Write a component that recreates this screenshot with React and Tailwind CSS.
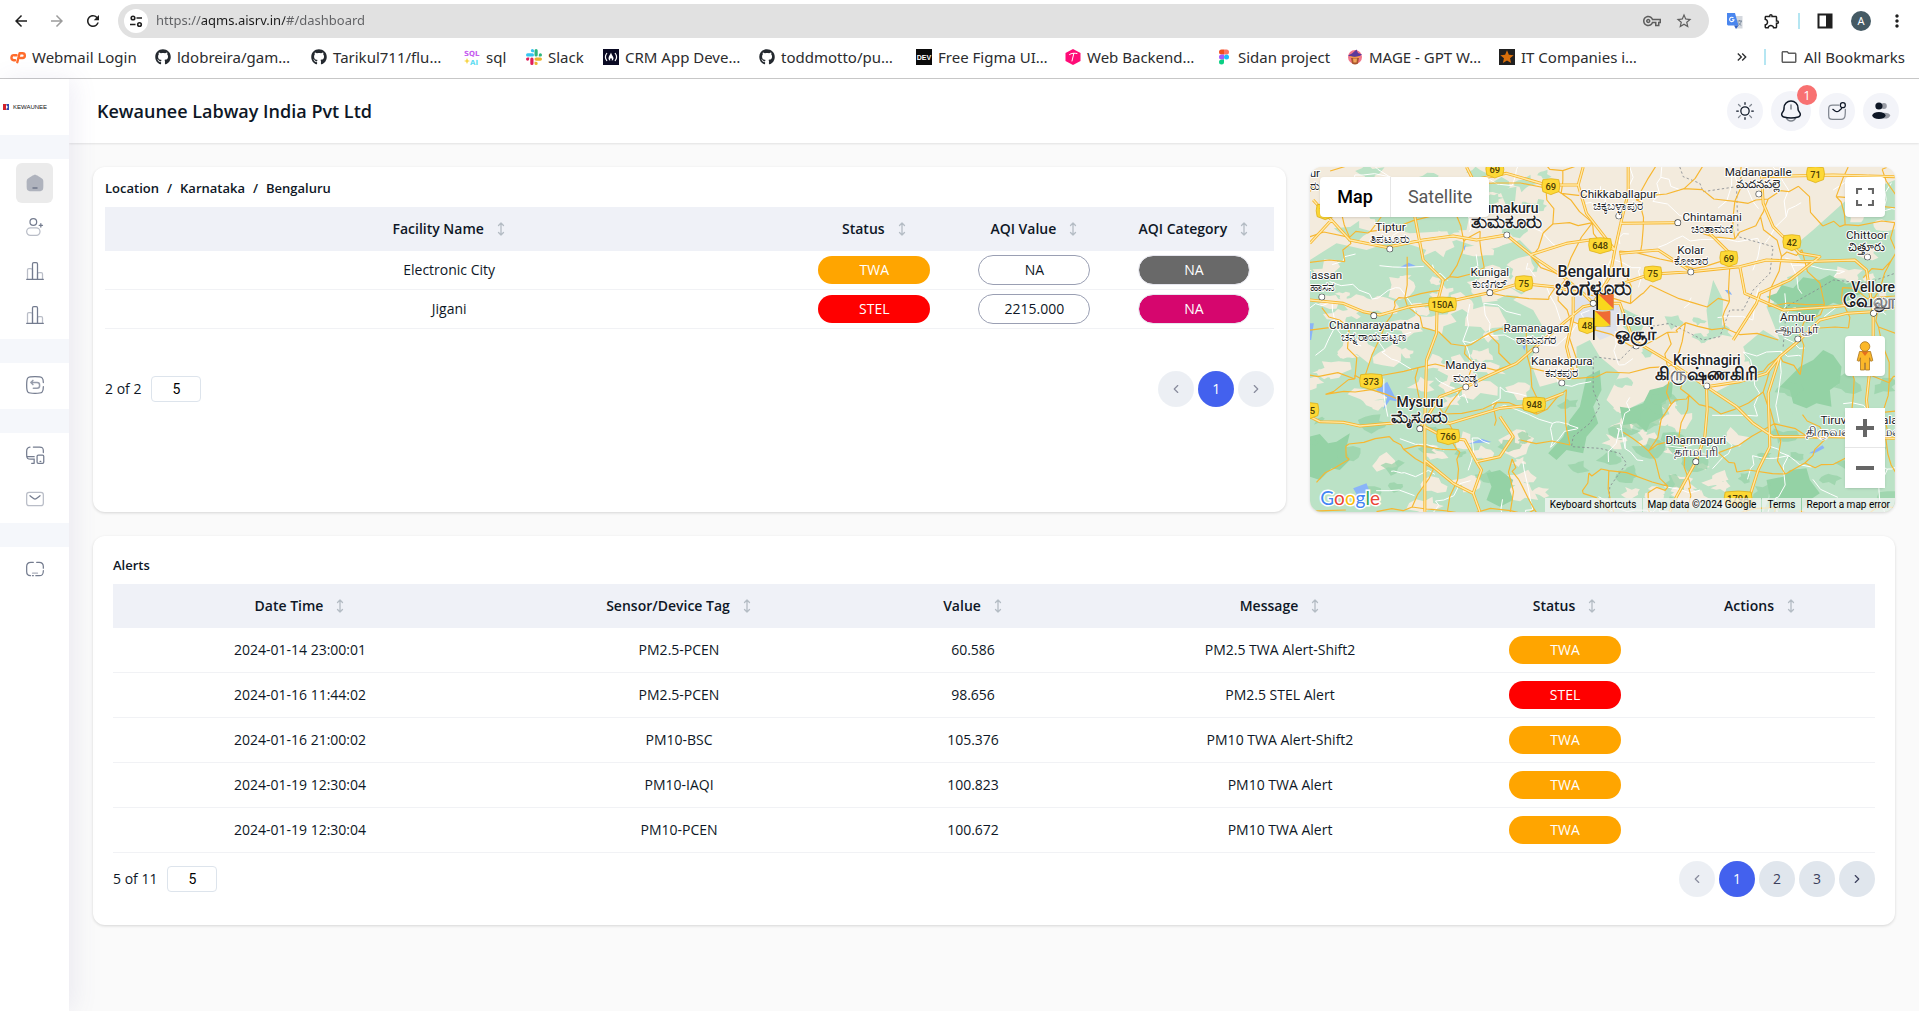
import React from "react";
import {
  MdArrowBack, MdArrowForward, MdRefresh, MdStarBorder, MdOutlineVpnKey, MdMoreVert,
  MdOutlineExtension, MdKeyboardDoubleArrowRight, MdOutlineFolder, MdStar,
} from "react-icons/md";
import { FaGithub } from "react-icons/fa";
import { ChevronLeft, ChevronRight } from "lucide-react";

/* ---------- Bookmark icons ---------- */

const CpanelIcon = () => (
  <svg viewBox="0 0 16 16" className="size-4" fill="none" stroke="#ff6c2c" strokeWidth="2.400" strokeLinecap="round" strokeLinejoin="round">
    <path d="M6.500 6.200H4.300a2.500 2.500 0 00-.6 5H5" />
    <path d="M7.300 13.200L9.600 4.200h2.600a2.300 2.300 0 01.4 4.800H10.300" />
  </svg>
);

const SqlIcon = () => (
  <svg viewBox="0 0 16 16" className="size-4">
    <g fontFamily="DejaVu Sans" fontWeight="700" fontSize="7">
      <text x="0" y="6.5" fill="#c65cf0">SQL</text>
      <text x="6" y="15.5" fill="#5fdcf2">AI</text>
    </g>
    <path d="M3 9l1 2.200 2 .8-2 .8-1 2.200-1-2.200-2-.8 2-.8z" fill="#f7d548" />
  </svg>
);

const SlackIcon = () => (
  <svg viewBox="0 0 16 16" className="size-4">
    <path d="M6.400 0a1.600 1.600 0 000 3.200H8V1.600A1.600 1.600 0 006.400 0zM1.600 4.300h4.800a1.600 1.600 0 010 3.200H1.600a1.600 1.600 0 010-3.200z" fill="#36c5f0" />
    <path d="M16 5.900a1.600 1.600 0 00-3.200 0v1.600h1.600A1.600 1.600 0 0016 5.900zM11.700 1.600v4.300a1.600 1.600 0 01-3.200 0V1.600a1.600 1.600 0 013.200 0z" fill="#2eb67d" />
    <path d="M10.100 16a1.600 1.600 0 000-3.200H8.500v1.600a1.600 1.600 0 001.600 1.600zM14.400 11.700h-4.300a1.600 1.600 0 010-3.200h4.300a1.600 1.600 0 010 3.200z" fill="#ecb22e" />
    <path d="M0 10.100a1.600 1.600 0 003.200 0V8.500H1.600A1.600 1.600 0 000 10.100zM4.300 14.400v-4.300a1.600 1.600 0 013.200 0v4.300a1.600 1.600 0 01-3.200 0z" fill="#e01e5a" />
  </svg>
);

const CampIcon = () => (
  <svg viewBox="0 0 16 16" className="size-4">
    <rect width="16" height="16" fill="#0a0a23" />
    <path d="M4 4c-2 2.500-2 5.500 0 8M12 4c2 2.500 2 5.500 0 8" fill="none" stroke="#fff" strokeWidth="1.200" />
    <path d="M8 3.500c-.5 2-2.500 3.500-2.500 5.700 0 1.500 1 2.400 1.800 2.600-.5-1-.2-2 .7-2.700.9.7 1.200 1.700.7 2.700.8-.2 1.800-1.100 1.800-2.600C10.500 7.500 8.500 6 8 3.500z" fill="#fff" />
  </svg>
);

const DevIcon = () => (
  <svg viewBox="0 0 16 16" className="size-4">
    <rect width="16" height="16" fill="#0b0b0b" />
    <text x="8" y="11" textAnchor="middle" fontFamily="Liberation Sans" fontWeight="700" fontSize="7" fill="#fff">DEV</text>
  </svg>
);

const HexIcon = () => (
  <svg viewBox="0 0 16 16" className="size-4">
    <path d="M8 0l7.500 4v8L8 16 .5 12V4z" fill="#ff0b77" />
    <path d="M4.500 5.500c2-1.500 5-1.500 7.500-1M8.800 4.500L7 12" stroke="#fff" strokeWidth="1" fill="none" strokeLinecap="round" />
  </svg>
);

const FigmaIcon = () => (
  <svg viewBox="0 0 16 16" className="size-4">
    <path d="M8 .5H5.500a2.500 2.500 0 000 5H8z" fill="#f24e1e" />
    <path d="M8 .5h2.500a2.500 2.500 0 010 5H8z" fill="#ff7262" />
    <path d="M8 5.500H5.500a2.500 2.500 0 000 5H8z" fill="#a259ff" />
    <circle cx="10.500" cy="8" r="2.500" fill="#1abcfe" />
    <path d="M8 10.500H5.500a2.500 2.500 0 102.500 2.500z" fill="#0acf83" />
  </svg>
);

const MageIcon = () => (
  <svg viewBox="0 0 16 16" className="size-4">
    <circle cx="8" cy="8" r="7" fill="#f3768a" />
    <path d="M4 9h8l-1 5.500c-2 1.300-4 1.300-6 0z" fill="#a8552e" />
    <path d="M1 6.500C4 8.500 12 8.500 15 5.500L11 4 9.500.5 5 4.500z" fill="#5b3a9b" />
    <path d="M3 7.500c3 1.200 7 1.200 10 0" stroke="#f0a52c" fill="none" />
    <path d="M6 9.500h4l-.5 4h-3z" fill="#f2a65a" />
  </svg>
);

const StarBox = () => (
  <span className="flex size-4 items-center justify-center bg-[#202020] text-[#d96f0b]">
    <MdStar className="size-4" />
  </span>
);

const TranslateIcon = () => (
  <svg viewBox="0 0 16 16" className="size-4">
    <path d="M6 3h9.500v12.500H9z" fill="#d4d8de" />
    <path d="M0 0h8l3.500 12.500H1L0 11.500z" fill="#4a86ee" />
    <path d="M7 12.500h4.500L9 16z" fill="#2f5fc4" />
    <path d="M6.500 5A2.200 2.200 0 107 6.700H5" fill="none" stroke="#fff" strokeWidth="1.100" />
    <path d="M10.500 8h4.500M12.700 7v1M14.300 8c-.4 2-1.500 3.300-3 4.300M11.300 9.500c.8 1.500 2 2.300 3 2.800" fill="none" stroke="#6d7f93" strokeWidth=".9" />
  </svg>
);

const bookmarks = [
  { label: "Webmail Login", icon: <CpanelIcon /> },
  { label: "ldobreira/gam…", icon: <FaGithub className="size-4 text-[#24292f]" /> },
  { label: "Tarikul711/flu…", icon: <FaGithub className="size-4 text-[#24292f]" /> },
  { label: "sql", icon: <SqlIcon /> },
  { label: "Slack", icon: <SlackIcon /> },
  { label: "CRM App Deve…", icon: <CampIcon /> },
  { label: "toddmotto/pu…", icon: <FaGithub className="size-4 text-[#24292f]" /> },
  { label: "Free Figma UI…", icon: <DevIcon /> },
  { label: "Web Backend…", icon: <HexIcon /> },
  { label: "Sidan project", icon: <FigmaIcon /> },
  { label: "MAGE - GPT W…", icon: <MageIcon /> },
  { label: "IT Companies i…", icon: <StarBox /> },
];

function BrowserBar() {
  return (
    <div className="border-b border-[#c8c8c8] bg-white font-['Noto_Sans',sans-serif] text-[#2b2c2e]">
      <div className="flex h-[42px] items-center px-3">
        <div className="flex items-center gap-[18px]">
          <button aria-label="Back"><MdArrowBack className="size-[18px] text-[#1f1f1f]" /></button>
          <button aria-label="Forward"><MdArrowForward className="size-[18px] text-[#9c9c9c]" /></button>
          <button aria-label="Reload"><MdRefresh className="size-[18px] text-[#1f1f1f]" /></button>
        </div>
        <form className="ml-4 flex h-[34px] flex-1 items-center rounded-full bg-[#e1e1e1] pr-4 pl-1.5">
          <button type="button" aria-label="View site information" className="flex size-6 items-center justify-center rounded-full bg-white">
            <svg viewBox="0 0 14 14" className="size-3.5 text-[#1f1f1f]" fill="none" stroke="currentColor" strokeWidth="1.600">
              <circle cx="4" cy="4" r="1.800" /><path d="M7.500 4H13M1 10.500h5.500" />
              <circle cx="10.500" cy="10.500" r="1.800" />
            </svg>
          </button>
          <input
            aria-label="Address"
            defaultValue="https://aqms.aisrv.in/#/dashboard"
            className="ml-2 min-w-0 flex-1 bg-[linear-gradient(90deg,#5f6063_45px,#1b1b1b_45px,#1b1b1b_129px,#5f6063_129px)] bg-clip-text text-[13px] text-transparent outline-none"
          />
          <div className="flex items-center gap-3.5 text-[#5e5e5e]">
            <button type="button" aria-label="Passwords"><MdOutlineVpnKey className="size-[18px]" /></button>
            <button type="button" aria-label="Bookmark this page"><MdStarBorder className="size-[18px]" /></button>
          </div>
        </form>
        <div className="ml-[18px] flex items-center text-[#1f1f1f]">
          <button aria-label="Translate" className="mr-5"><TranslateIcon /></button>
          <button aria-label="Extensions"><MdOutlineExtension className="size-[18px]" /></button>
          <span className="mx-[17px] h-4 w-0.5 bg-[#b5e6f2]" />
          <button aria-label="Side panel" className="mr-[18px]">
            <svg viewBox="0 0 16 16" className="size-4"><path d="M1.500 1.500h13v13h-13z" fill="none" stroke="#1f1f1f" strokeWidth="2" /><path d="M9 1h6v14H9z" fill="#1f1f1f" /></svg>
          </button>
          <button aria-label="Profile" className="mr-4 size-5 rounded-full bg-[#455a64] text-[11px] leading-5 text-white">A</button>
          <button aria-label="Menu"><MdMoreVert className="size-5" /></button>
        </div>
      </div>
      <nav aria-label="Bookmarks" className="flex h-9 items-center justify-between pr-3.5 pb-1.5 pl-2.5 text-[15px]">
        <ul className="grid grid-cols-[145px_156px_153px_62px_77px_156px_157px_149px_151px_131px_152px_150px]">
          {bookmarks.map((b) => (
            <li key={b.label}>
              <a href="#" className="flex items-center gap-1.5 whitespace-nowrap">{b.icon}{b.label}</a>
            </li>
          ))}
        </ul>
        <div className="flex items-center">
          <button aria-label="More bookmarks"><MdKeyboardDoubleArrowRight className="size-4" /></button>
          <span className="mx-3.5 h-4 w-0.5 bg-[#b5e6f2]" />
          <a href="#" className="flex items-center gap-1.5 whitespace-nowrap">
            <MdOutlineFolder className="size-[18px] text-[#5e5e5e]" />All Bookmarks
          </a>
        </div>
      </nav>
    </div>
  );
}

/* ---------- Sidebar ---------- */

function Duo({ children }) {
  return (
    <svg viewBox="0 0 24 24" className="size-5" fill="none" stroke="#747c8f" strokeWidth="1.500" strokeLinecap="round">
      {children}
    </svg>
  );
}

const ChartIcon = () => (
  <Duo>
    <path d="M22 22H2" />
    <path d="M3 22V10.500C3 9.700 3.500 9 4.500 9h2C7.500 9 9 9.500 9 10.500V22M15 22v-6.500c0-.8.5-1.500 1.500-1.500h3c1 0 1.500.7 1.500 1.500V22" opacity=".5" />
    <path d="M9 22V3.500C9 2.500 9.700 2 10.500 2h3c.8 0 1.500.5 1.500 1.500V22" />
  </Duo>
);

const homePath =
  "M2 12.200c0-2.290 0-3.430.52-4.380.52-.95 1.470-1.540 3.370-2.720l2-1.240C9.890 2.620 10.900 2 12 2s2.100.62 4.100 1.860l2 1.240c1.900 1.180 2.850 1.770 3.370 2.720.52.95.52 2.100.52 4.380v1.530c0 3.900 0 5.850-1.170 7.060C19.660 22 17.770 22 14 22h-4c-3.770 0-5.660 0-6.830-1.210C2 19.580 2 17.630 2 13.730z";

const sidebarGroups = [
  [
    { name: "Dashboard", active: true, icon: <Duo><path d={homePath} fill="#747c8f" stroke="none" opacity=".5" /><path d="M9 18h6" strokeWidth="2" strokeLinecap="butt" /></Duo> },
    { name: "Users", icon: <Duo><circle cx="10" cy="6" r="4" /><path d="M21 10h-4M19 8v4" /><rect x="2" y="13" width="16" height="9" rx="4.500" opacity=".5" /></Duo> },
    { name: "Device reports", icon: <ChartIcon /> },
    { name: "Sensor reports", icon: <ChartIcon /> },
  ],
  [{ name: "Back", icon: <Duo><path d="M22 14c0 4 0 5-1.500 6.500S17 22 12 22s-7 0-8.500-1.500S2 17 2 12s0-7 1.500-8.500S7 2 12 2s7 0 8.500 1.500C21.600 4.600 22 6 22 9" /><path d="M7 9h7.500a3 3 0 013 3v1a3 3 0 01-3 3H10M7 9l2.500-2.500M7 9l2.500 2.500" strokeWidth="1.800" opacity=".75" /></Duo> }],
  [
    { name: "Devices", icon: <Duo><path d="M22 9V7c0-3.500-1-4.500-4.500-4.500H10M6 2.600C3 3 2 4 2 7.500V12c0 4 1 5 5 5h4v5M2 14h9M8 22h3" /><rect x="14.500" y="12" width="8" height="10" rx="1.500" /><path d="M18 19.500h1" /></Duo> },
    { name: "Mail", icon: <Duo><rect x="2" y="4" width="20" height="16" rx="3" opacity=".5" /><path d="M6 8l2.160 1.800C10 11.330 10.900 12.100 12 12.100s2-.77 3.840-2.300L18 8" /></Duo> },
  ],
  [{ name: "Display", icon: <Duo><path d="M10 4H7C3.500 4 2 5 2 9v6c0 3.500 1 5 4.500 5M14 4h3c3.500 0 5 1 5 5v2M22 14c0 4.500-1 6-5 6h-4M9 20h1" /><path d="M9 17h6" opacity=".6" /></Duo> }],
];

function Sidebar() {
  return (
    <aside className="relative z-10 w-[69px] shrink-0 bg-white shadow-[5px_0_25px_0_rgba(94,92,154,0.1)]">
      <a href="#" aria-label="Home" className="flex h-14 items-center gap-1 pl-[3px]">
        <svg viewBox="0 0 6 6" className="size-1.5"><path d="M0 0h3.500v6H0z" fill="#d2232a" /><path d="M3.500 0H6v6H3.500z" fill="#2d4db0" /><path d="M3 1l2 2-2 2z" fill="#fff" /></svg>
        <span className="font-['Liberation_Sans',sans-serif] text-[6px] leading-none text-[#111]">KEWAUNEE</span>
      </a>
      {sidebarGroups.map((group, i) => (
        <div key={i}>
          <div className="h-6 bg-[#f5f7fb]" />
          <ul className={i === 0 ? "pt-1" : "pt-0.5"}>
            {group.map((item, j) => (
              <li key={j} className="flex justify-center px-4 pb-1">
                <a
                  href="#"
                  aria-label={item.name}
                  className={
                    item.active
                      ? "flex h-10 w-[38px] items-center justify-center rounded-md bg-[#ebebeb]"
                      : "flex h-10 w-[38px] items-center justify-center rounded-md"
                  }
                >
                  {item.icon}
                </a>
              </li>
            ))}
          </ul>
        </div>
      ))}
    </aside>
  );
}

/* ---------- Header ---------- */

function Header() {
  const round = "flex size-9 items-center justify-center rounded-full bg-[#f3f4f9]";
  return (
    <header className="flex h-16 items-center justify-between bg-white pr-5 pl-7 shadow-[0_1px_2px_rgba(0,0,0,0.1)]">
      <h1 className="text-[18px] font-semibold">Kewaunee Labway India Pvt Ltd</h1>
      <div className="flex items-center gap-2">
        <button aria-label="Toggle theme" className={round}>
          <svg viewBox="0 0 24 24" className="size-5" fill="none" stroke="#0e1726" strokeWidth="1.500" strokeLinecap="round">
            <circle cx="12" cy="12" r="5" />
            <path d="M12 2v2M12 20v2M4 12H2M22 12h-2" />
            <path d="M19.800 4.200l-2.200 2M4.200 4.200l2.200 2M6.400 17.600l-2.200 2.200M19.800 19.800l-2.200-2.200" opacity=".5" />
          </svg>
        </button>
        <button aria-label="Notifications, 1 new" className="relative flex size-10 items-center justify-center rounded-full bg-[#f3f4f9]">
          <svg viewBox="0 0 24 24" className="size-6" fill="none" stroke="#0e1726" strokeWidth="1.500" strokeLinecap="round">
            <path d="M19 9.700V9c0-3.870-3.130-7-7-7S5 5.130 5 9v.7c0 .85-.25 1.670-.72 2.380l-1.150 1.720c-1.050 1.570-.25 3.710 1.580 4.210a27.600 27.600 0 0014.580 0c1.830-.5 2.630-2.640 1.580-4.210l-1.150-1.720A4.290 4.290 0 0119 9.700z" />
            <path d="M7.500 19c.66 1.750 2.420 3 4.500 3s3.840-1.250 4.500-3M12 6v4" opacity=".5" />
          </svg>
          <span className="absolute -top-1.5 -right-1.5 size-5 rounded-full bg-[#f87171] text-center text-[13px] leading-5 text-white">1</span>
        </button>
        <button aria-label="Messages" className={round}>
          <svg viewBox="0 0 24 24" className="size-5" fill="none" stroke="#0e1726" strokeWidth="1.500" strokeLinecap="round">
            <path d="M22 10c0 8 0 12-5 12H7c-4 0-5-1-5-5v-7c0-4 1-5 5-5h7" opacity=".5" />
            <circle cx="19" cy="5" r="3" />
            <path d="M7 10l2.700 2c1.500 1.100 3 1.100 4.500 0L17.500 9" />
          </svg>
        </button>
        <button aria-label="Account" className={round}>
          <svg viewBox="0 0 24 24" className="size-5" fill="#0e1726">
            <circle cx="15.500" cy="6" r="3.500" opacity=".4" />
            <ellipse cx="16.500" cy="17.500" rx="6.500" ry="3.500" opacity=".4" />
            <circle cx="9.500" cy="6" r="4.300" /><ellipse cx="9.500" cy="17.500" rx="8" ry="4.200" />
          </svg>
        </button>
      </div>
    </header>
  );
}

/* ---------- Tables ---------- */

function Th({ children, className }) {
  return (
    <th className={className}>
      <button className="mx-auto flex items-center gap-3 font-semibold whitespace-nowrap">
        {children}
        <svg viewBox="0 0 10 14" className="h-3.5 w-2.5" fill="none" stroke="#b4bcc4" strokeWidth="1.300" strokeLinecap="round" strokeLinejoin="round">
          <path d="M5 1v12M2.500 3.500L5 1l2.500 2.500M2.500 10.500L5 13l2.500-2.500" />
        </svg>
      </button>
    </th>
  );
}

const pillTone = {
  TWA: "h-7 bg-[#ffa500] text-white",
  STEL: "h-7 bg-[#ff0000] text-white",
  outline: "h-[30px] border border-[#9a9fb3]",
  gray: "h-[30px] border border-[#e6e6ee] bg-[#696969] bg-clip-padding text-white",
  pink: "h-[30px] border border-[#e6e6ee] bg-[#d6066e] bg-clip-padding text-white",
};

function Pill({ tone, children }) {
  return (
    <span className={`mx-auto flex w-28 items-center justify-center rounded-full ${pillTone[tone]}`}>
      {children}
    </span>
  );
}

function Pager({ id, summary, pages, hasNext }) {
  return (
    <div className="flex items-center justify-between">
      <div className="flex items-center gap-2.5">
        <label htmlFor={id}>{summary}</label>
        <select id={id} className="h-[26px] w-[50px] appearance-none rounded border border-[#dde4ec] bg-white text-center [text-align-last:center] font-[Roboto,sans-serif] text-black">
          <option>5</option>
          <option>10</option>
          <option>20</option>
        </select>
      </div>
      <div className="flex gap-1 text-[#3b3f5c]">
        <button aria-label="Previous page" disabled className="flex size-9 items-center justify-center rounded-full bg-[#e0e6ed] opacity-60"><ChevronLeft className="size-3.5" /></button>
        {pages.map((p) => (
          <button key={p} className={p === 1 ? "size-9 rounded-full bg-[#4361ee] text-white" : "size-9 rounded-full bg-[#e0e6ed]"}>{p}</button>
        ))}
        <button aria-label="Next page" disabled={!hasNext} className="flex size-9 items-center justify-center rounded-full bg-[#e0e6ed] disabled:opacity-60"><ChevronRight className="size-3.5" /></button>
      </div>
    </div>
  );
}

const facilities = [
  { name: "Electronic City", status: "TWA", value: "NA", category: "NA", tone: "gray" },
  { name: "Jigani", status: "STEL", value: "2215.000", category: "NA", tone: "pink" },
];

function FacilityCard() {
  return (
    <section className="col-span-2 rounded-xl bg-white px-3 pt-2.5 shadow-[0_1px_3px_rgba(0,0,0,0.15)]">
      <nav aria-label="Breadcrumb" className="flex h-[30px] items-start gap-2 text-[13px] leading-[22px] font-semibold">
        <a href="#">Location</a><span>/</span><a href="#">Karnataka</a><span>/</span><a href="#">Bengaluru</a>
      </nav>
      <table className="w-full table-fixed border-separate border-spacing-0 text-center">
        <thead className="bg-[#eff1f7]">
          <tr className="h-11">
            <Th>Facility Name</Th>
            <Th className="w-[162px]">Status</Th>
            <Th className="w-[158px]">AQI Value</Th>
            <Th className="w-[161px]">AQI Category</Th>
          </tr>
        </thead>
        <tbody>
          {facilities.map((f) => (
            <tr key={f.name} className="h-[39px] *:border-b *:border-[#f1f2f5]">
              <td>{f.name}</td>
              <td><Pill tone={f.status}>{f.status}</Pill></td>
              <td><Pill tone="outline">{f.value}</Pill></td>
              <td><Pill tone={f.tone}>{f.category}</Pill></td>
            </tr>
          ))}
        </tbody>
      </table>
      <div className="pt-[42px]">
        <Pager id="facility-rows" summary="2 of 2" pages={[1]} hasNext={false} />
      </div>
    </section>
  );
}

const alerts = [
  ["2024-01-14 23:00:01", "PM2.5-PCEN", "60.586", "PM2.5 TWA Alert-Shift2", "TWA"],
  ["2024-01-16 11:44:02", "PM2.5-PCEN", "98.656", "PM2.5 STEL Alert", "STEL"],
  ["2024-01-16 21:00:02", "PM10-BSC", "105.376", "PM10 TWA Alert-Shift2", "TWA"],
  ["2024-01-19 12:30:04", "PM10-IAQI", "100.823", "PM10 TWA Alert", "TWA"],
  ["2024-01-19 12:30:04", "PM10-PCEN", "100.672", "PM10 TWA Alert", "TWA"],
];

function AlertsCard() {
  return (
    <section className="rounded-xl bg-white px-5 pt-[18px] pb-7 shadow-[0_1px_3px_rgba(0,0,0,0.15)]">
      <h2 className="h-[30px] text-[13px] leading-[22px] font-semibold">Alerts</h2>
      <table className="w-full table-fixed border-separate border-spacing-0 text-center">
        <thead className="bg-[#eff1f7]">
          <tr className="h-11">
            <Th>Date Time</Th>
            <Th className="w-[384px]">Sensor/Device Tag</Th>
            <Th className="w-[204px]">Value</Th>
            <Th className="w-[410px]">Message</Th>
            <Th className="w-[160px]">Status</Th>
            <Th className="w-[230px]">Actions</Th>
          </tr>
        </thead>
        <tbody>
          {alerts.map(([time, tag, value, message, status], i) => (
            <tr key={i} className="h-[45px] *:border-b *:border-[#f1f2f5]">
              <td>{time}</td>
              <td>{tag}</td>
              <td>{value}</td>
              <td>{message}</td>
              <td><Pill tone={status}>{status}</Pill></td>
              <td></td>
            </tr>
          ))}
        </tbody>
      </table>
      <div className="pt-2">
        <Pager id="alert-rows" summary="5 of 11" pages={[1, 2, 3]} hasNext />
      </div>
    </section>
  );
}

/* ---------- Map ---------- */

function makeRandom(seed) {
  let s = seed;
  return () => {
    s = (s * 1664525 + 1013904223) % 4294967296;
    return s / 4294967296;
  };
}

function blob(rand, cx, cy, r) {
  const n = 11;
  const pts = [];
  for (let i = 0; i < n; i++) {
    const a = (i / n) * Math.PI * 2;
    const d = r * (0.4 + rand() * 0.9);
    pts.push(`${Math.round(cx + Math.cos(a) * d * 1.3)},${Math.round(cy + Math.sin(a) * d * 0.8)}`);
  }
  return `M${pts.join("L")}Z`;
}

function scatter(seed, count, x0, y0, x1, y1, rMin, rMax) {
  const rand = makeRandom(seed);
  let d = "";
  for (let i = 0; i < count; i++) {
    d += blob(rand, x0 + rand() * (x1 - x0), y0 + rand() * (y1 - y0), rMin + rand() * (rMax - rMin));
  }
  return d;
}

function network(seed, stepX, stepY, chance) {
  const rand = makeRandom(seed);
  const cols = Math.ceil(1900 / stepX);
  const rows = Math.ceil(1150 / stepY);
  const node = [];
  for (let r = 0; r <= rows; r++) {
    for (let c = 0; c <= cols; c++) {
      node.push([c * stepX + (rand() - 0.5) * stepX * 0.9, r * stepY + (rand() - 0.5) * stepY * 0.9]);
    }
  }
  let d = "";
  const link = (a, b) => {
    const m = [0.33, 0.66].map((t) => [
      a[0] + (b[0] - a[0]) * t + (rand() - 0.5) * 26,
      a[1] + (b[1] - a[1]) * t + (rand() - 0.5) * 26,
    ]);
    d += "M" + [a, ...m, b].map((p) => `${Math.round(p[0])},${Math.round(p[1])}`).join("L");
  };
  for (let r = 0; r < rows; r++) {
    for (let c = 0; c < cols; c++) {
      const i = r * (cols + 1) + c;
      if (rand() < chance) link(node[i], node[i + 1]);
      if (rand() < chance) link(node[i], node[i + cols + 1]);
    }
  }
  return d;
}

const highways = [
  "M30,420L130,430L190,455L240,465L330,440L430,428L560,400L660,370L760,380L850,400",
  "M30,250L95,180L150,240L260,262L370,240L460,228L530,240L620,225",
  "M95,180L40,120M345,170L370,300L430,360L412,430L410,520L380,600L375,780L375,1055",
  "M360,806L420,710L500,680L560,650L650,610L708,560L790,490L850,440L900,430",
  "M620,225L700,290L790,350L850,400L880,430",
  "M30,770L60,785L130,787L180,798L270,790L360,780",
  "M360,780L450,790L600,745L700,735L790,700",
  "M375,800L430,830L495,840L530,905L600,890L640,830L600,770",
  "M375,900L460,970L520,1000L545,930L530,905M520,1000L540,1055",
  "M820,410V470L800,560L820,640",
  "M690,285L800,250L870,240L945,270",
  "M500,21L520,60L620,40L740,75L835,75L850,21M835,75L860,160L945,270",
  "M985,21L985,100L965,180L945,270L930,350L880,430L960,430L1000,540L1100,600L1160,640L1220,680",
  "M880,430L940,380L1050,343L1175,335L1320,320L1400,300L1510,305L1665,300L1700,330L1720,460L1720,540L1700,720L1720,900",
  "M1220,680L1222,750L1215,830L1188,905L1130,1010L1110,1055",
  "M1220,680L1320,665L1400,640L1440,590L1500,540L1560,480L1640,460L1720,455L1785,440",
  "M1220,680L1310,740L1360,790L1420,830L1600,830L1785,835",
  "M1410,860L1405,700L1440,590M1410,860L1375,930L1335,1055",
  "M1385,40L1390,130L1420,200L1500,280L1560,290L1470,360L1380,400L1370,430L1300,540",
  "M1385,50L1600,45L1785,50M1320,320L1335,400L1450,450L1600,440L1700,430",
  "M960,190L1134,188M1209,200L1300,290M1175,335L1075,270L960,280",
];

const greenLand =
  "M30,300L110,250L200,270L290,240L380,270L470,240L560,270L660,240L720,300L700,380L640,420L700,450L740,520L690,600L720,680L830,650L830,560L870,540L900,590L960,640L920,720L960,760L1080,700L1180,640L1240,700L1360,640L1330,560L1390,510L1440,540L1400,440L1440,360L1520,330L1480,260L1540,210L1640,120L1785,60V1057H30Z" +
  "M200,120L330,130L420,90L520,110L500,210L330,220L230,190Z" +
  "M600,90L650,80L645,130L620,140ZM1240,360L1270,420L1265,520L1230,540L1220,450ZM960,440L1040,480L1010,540L970,500Z";

const forest =
  "M1400,410L1430,400L1445,375L1480,385L1510,352L1560,360L1590,345L1640,372L1665,362L1690,400L1655,412L1640,440L1600,428L1560,450L1545,480L1520,490L1490,455L1450,452L1430,430Z" +
  "M30,830L60,822L85,850L110,845L150,820L138,870L150,900L120,930L95,925L60,960L30,950Z" +
  "M860,650L900,630L905,690L880,740L895,790L860,830L850,880L800,870L770,900L745,880L790,830L810,780L840,740Z" +
  "M1500,620L1540,600L1570,570L1600,585L1625,620L1620,670L1590,690L1595,740L1550,730L1520,745L1480,730L1470,690L1440,680L1470,650Z" +
  "M960,740L990,745L1030,730L1050,690L1090,680L1120,660L1115,710L1085,730L1090,770L1050,790L1040,815L1010,790L970,795Z" +
  "M1400,960L1450,950L1470,930L1520,925L1530,960L1560,1000L1530,1020L1500,1057L1390,1057L1410,1010ZM560,940L600,930L640,960L630,990L640,1020L600,1040L560,1020L575,980Z";

const water =
  "M228,690L262,665L285,710L320,730L270,720L250,750L262,712ZM490,262l8,-8-4,18zM296,324l30,-16 22,10zM505,852l40,-16 30,10-50,4zM160,985l40,-15 15,40-35,10zM1528,880l40,-24 6,8-30,16zM1275,390l12,0 10,14-12,-2zM668,560l10,-6-4,18zM30,490l12,0-8,50-4,0z";

const borders =
  "M1140,21L1150,50L1200,70L1210,95L1310,80L1340,20M1310,80L1315,230L1420,260L1410,340L1360,390L1330,450L1290,450L1260,530L1210,540L1110,490L1050,500L1000,470M1000,560L960,600L880,590L880,690L900,740L870,790L820,830L815,860L900,865L960,880L980,910L930,980L925,1055M1450,560L1460,440L1550,390L1600,360L1700,370L1785,340";

/* English name, local name, text x, two baselines, town dot, English size, local size */
const places = [
  ["ur", "ರು", 45, 52, 89, 0, 0, 35, 35],
  ["Tumakuru", "ತುಮಕೂರು", 621, 160, 203, 621, 225, 42, 56],
  ["Tiptur", "ತಿಪಟೂರು", 272, 213, 248, 270, 267, 35, 35],
  ["Kunigal", "ಕುಣಿಗಲ್", 570, 348, 384, 570, 398, 35, 35],
  ["Hassan", "ಹಾಸನ", 68, 357, 393, 66, 411, 35, 35],
  ["Channarayapatna", "ಚನ್ನರಾಯಪಟ್ಟಣ", 224, 507, 543, 222, 467, 35, 35],
  ["Ramanagara", "ರಾಮನಗರ", 710, 516, 553, 708, 570, 35, 35],
  ["Kanakapura", "ಕನಕಪುರ", 786, 615, 652, 786, 669, 35, 35],
  ["Mandya", "ಮಂಡ್ಯ", 498, 627, 665, 498, 681, 35, 35],
  ["Mysuru", "ಮೈಸೂರು", 360, 742, 790, 360, 806, 42, 54],
  ["Bengaluru", "ಬೆಂಗಳೂರು", 882, 352, 406, 880, 430, 48, 62],
  ["Chikkaballapur", "ಚಿಕ್ಕಬಳ್ಳಾಪುರ", 956, 113, 150, 957, 168, 35, 35],
  ["Madanapalle", "మదనపల్లె", 1375, 48, 85, 1377, 102, 35, 35],
  ["Chintamani", "ಚಿಂತಾಮಣಿ", 1237, 183, 219, 1134, 188, 35, 35],
  ["Kolar", "ಕೋಲಾರ", 1173, 281, 316, 1173, 336, 35, 35],
  ["Hosur", "ஓசூர்", 1006, 495, 540, 1009, 558, 42, 54],
  ["Krishnagiri", "கிருஷ்ணகிரி", 1221, 615, 660, 1221, 678, 42, 54],
  ["Ambur", "ஆம்பூர்", 1493, 483, 519, 1494, 537, 35, 38],
  ["Vellore", "வேலூர்", 1720, 395, 440, 1721, 460, 42, 54],
  ["Chittoor", "చిత్తూరు", 1701, 237, 273, 1703, 291, 35, 35],
  ["Dharmapuri", "தர்மபுரி", 1188, 851, 888, 1188, 905, 35, 38],
  ["Tiruvannamalai", "திருவண்ணாமலை", 1682, 793, 828, 0, 0, 35, 38],
];

const shields = [
  ["69", 585, 30], ["69", 753, 80], ["73", 76, 155], ["648", 901, 257], ["75", 672, 371], ["150A", 428, 435],
  ["48", 862, 497], ["373", 214, 665], ["75", 30, 752], ["948", 703, 735], ["766", 445, 830], ["71", 1547, 44],
  ["42", 1476, 248], ["69", 1287, 296], ["75", 1059, 342], ["179A", 1315, 1017],
];

function MapCanvas() {
  return (
    <svg viewBox="30 21 1755 1035" preserveAspectRatio="xMidYMid slice" className="absolute inset-0 size-full" fontFamily="Roboto, 'Noto Sans', sans-serif">
      <rect x="0" y="0" width="1850" height="1100" fill="#f3ebdd" />
      <path d={greenLand} fill="#bbe2c6" />
      <path d={scatter(7, 54, 30, 230, 760, 760, 16, 52)} fill="#f3ebdd" />
      <path d={scatter(19, 26, 30, 40, 760, 240, 12, 38)} fill="#bbe2c6" />
      <path d={scatter(29, 16, 900, 960, 1785, 440, 10, 30)} fill="#bbe2c6" />
      <path d={scatter(43, 16, 260, 830, 760, 1050, 14, 46)} fill="#f3ebdd" />
      <path d={scatter(53, 26, 940, 720, 1300, 1040, 12, 36)} fill="#f3ebdd" />
      <path d={scatter(61, 14, 1300, 100, 1780, 420, 10, 36)} fill="#f3ebdd" />
      <path d={forest} fill="#94d2a5" />
      <path d={scatter(71, 30, 700, 650, 1780, 1050, 12, 42)} fill="#94d2a5" opacity=".7" />
      <path d={scatter(83, 14, 30, 780, 700, 1050, 10, 34)} fill="#94d2a5" opacity=".7" />
      <path d="M820,400L900,390L960,440L950,520L900,540L860,490L810,480Z" fill="#dfe2ea" />
      <path d={water} fill="#8ab4f8" />
      <path d={network(11, 84, 76, 0.26)} fill="none" stroke="#fff" strokeWidth="3" strokeLinejoin="round" />
      <path d={borders} fill="none" stroke="#84898f" strokeWidth="2.500" strokeDasharray="7 7" />
      <path d={network(5, 118, 104, 0.6)} fill="none" stroke="#f7b731" strokeWidth="3.500" strokeLinejoin="round" />
      <g fill="none" strokeLinejoin="round">
        <path d={highways.join("")} stroke="#f7b52c" strokeWidth="9" />
        <path d={highways.join("")} stroke="#ffe9a8" strokeWidth="4" />
      </g>
      {shields.map(([label, x, y], i) => {
        const w = 18 + label.length * 15;
        return (
          <g key={i}>
            <path d={`M${x - w / 2},${y - 21}q${w / 2},-6 ${w},0q6,20 0,36q-${w / 4},4 -${w / 2},9q-${w / 4},-5 -${w / 2},-9q-6,-18 0,-36z`} fill="#fdd835" stroke="#d9a90f" strokeWidth="2" />
            <text x={x} y={y + 10} textAnchor="middle" fontSize="28" fontWeight="500" fill="#4a3c05">{label}</text>
          </g>
        );
      })}
      <g textAnchor="middle" fill="#202124" stroke="#fff" strokeWidth="6" strokeLinejoin="round" paintOrder="stroke">
        {places.map(([en, local, x, y1, y2, dx, dy, size, localSize], i) => (
          <g key={i} fontWeight={size > 35 ? 500 : 400}>
            {dx > 0 && <circle cx={dx} cy={dy} r="8" fill="#fff" stroke="#3c4043" strokeWidth="4" />}
            <text x={x} y={y1} fontSize={size}>{en}</text>
            <text x={x} y={y2} fontSize={localSize} fontWeight={size > 35 ? 700 : 400}>{local}</text>
          </g>
        ))}
      </g>
      {[[892, 400, 50], [882, 450, 90]].map(([x, y, pole]) => (
        <g key={x}>
          <path d={`M${x + 4},${y + 5}h46v46h-46z`} fill="#000" opacity=".25" />
          <path d={`M${x},${y}v${pole}`} stroke="#111" strokeWidth="5" />
          <path d={`M${x + 3},${y + 2}q22,6 46,0v44q-22,8 -46,2z`} fill="#f9d71c" />
          <path d={`M${x + 3},${y + 2}q22,6 46,0v44z`} fill="#ef6a35" />
        </g>
      ))}
    </svg>
  );
}

function MapCard() {
  const control = "flex items-center justify-center bg-white text-[#666]";
  return (
    <section aria-label="Map" className="relative h-[345px] overflow-hidden rounded-xl bg-[#f3ebdd] font-[Roboto,sans-serif] shadow-[0_1px_3px_rgba(0,0,0,0.15)]">
      <MapCanvas />
      <div className="absolute top-2.5 left-2.5 flex h-10 divide-x divide-[#e6e6e6] rounded-sm bg-white text-[18px] shadow">
        <button className="px-[17px] font-medium text-black">Map</button>
        <button className="px-[17px] text-[#565656]">Satellite</button>
      </div>
      <div className="absolute top-2.5 right-2.5 bottom-6 flex flex-col items-center">
        <button aria-label="Toggle fullscreen view" className={`${control} size-10 rounded-sm shadow`}>
          <svg viewBox="0 0 18 18" className="size-[18px]" fill="none" stroke="currentColor" strokeWidth="2.200"><path d="M1 6V1h5M12 1h5v5M17 12v5h-5M6 17H1v-5" /></svg>
        </button>
        <button aria-label="Street View" className={`${control} mt-auto size-10 rounded-sm shadow`}>
          <svg viewBox="0 0 20 30" className="h-[30px] w-5" fill="#fbb829" stroke="#a8741f" strokeWidth=".8">
            <path d="M4.500 10.500h11l2.300 9-2 .8-1.300-3.500V29h-4v-7h-1v7h-4V16.800L4.200 20.300l-2-.8z" />
            <path d="M6.500 10.500h7L10 15z" fill="#e4701e" stroke="none" />
            <circle cx="10" cy="5.500" r="4.800" />
          </svg>
        </button>
        <div className="mt-8 flex flex-col items-center divide-y divide-[#e6e6e6] rounded-sm bg-white shadow">
          <button aria-label="Zoom in" className={`${control} size-10`}>
            <svg viewBox="0 0 18 18" className="size-[18px]" stroke="currentColor" strokeWidth="4"><path d="M9 0v18M0 9h18" /></svg>
          </button>
          <button aria-label="Zoom out" className={`${control} size-10`}>
            <svg viewBox="0 0 18 18" className="size-[18px]" stroke="currentColor" strokeWidth="4"><path d="M0 9h18" /></svg>
          </button>
        </div>
      </div>
      <a href="#" className="absolute bottom-0.5 left-2.5 font-['Lato',sans-serif] text-[19px] leading-6 [-webkit-text-stroke:3px_white] [paint-order:stroke]">
        <span className="text-[#4285f4]">G</span><span className="text-[#ea4335]">o</span><span className="text-[#fbbc04]">o</span><span className="text-[#4285f4]">g</span><span className="text-[#34a853]">l</span><span className="text-[#ea4335]">e</span>
      </a>
      <div className="absolute right-0 bottom-0 flex h-3.5 gap-px text-[10px] leading-3.5 text-black">
        <button className="bg-[#f5f5f5]/75 px-[5px]">Keyboard shortcuts</button>
        <span className="bg-[#f5f5f5]/75 px-[5px]">Map data ©2024 Google</span>
        <a href="#" className="bg-[#f5f5f5]/75 px-[5px]">Terms</a>
        <a href="#" className="bg-[#f5f5f5]/75 px-[5px]">Report a map error</a>
      </div>
    </section>
  );
}

export default function App() {
  return (
    <div className="flex min-h-screen flex-col bg-[#fafafa]">
      <BrowserBar />
      <div className="flex flex-1 font-['Open_Sans',sans-serif] text-[14px] leading-5 text-[#0e1726]">
        <Sidebar />
        <div className="min-w-0 flex-1">
          <Header />
          <main className="flex flex-col gap-6 p-6">
            <div className="grid grid-cols-3 gap-6">
              <FacilityCard />
              <MapCard />
            </div>
            <AlertsCard />
          </main>
        </div>
      </div>
    </div>
  );
}
